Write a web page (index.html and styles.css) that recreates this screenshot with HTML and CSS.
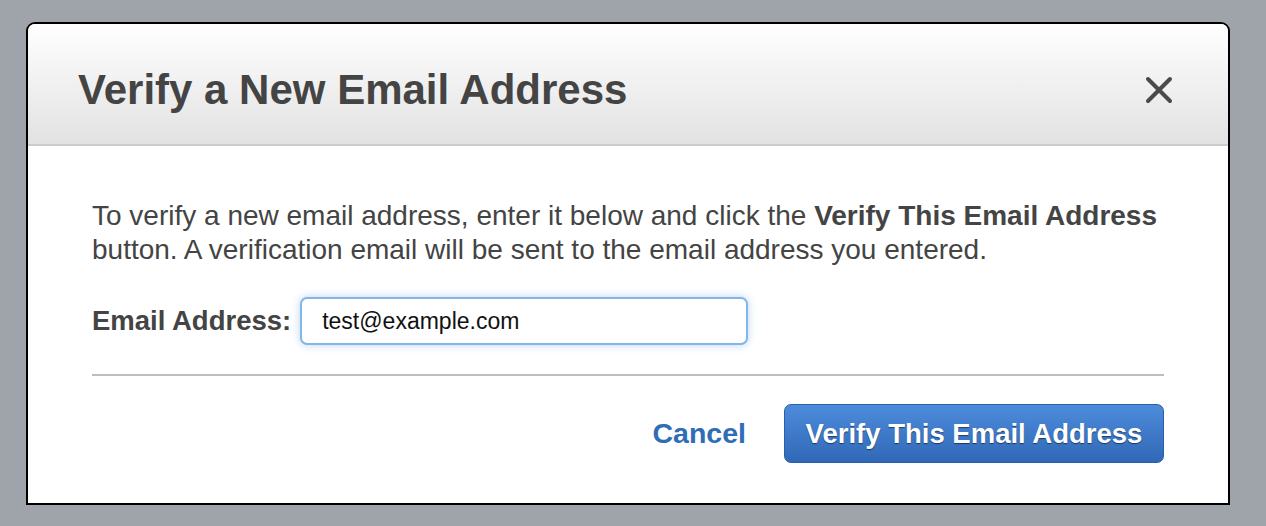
FILE: index.html
```html
<!DOCTYPE html>
<html lang="en">
<head>
    <meta charset="UTF-8">
    <title>Verify a New Email Address</title>
    <link rel="stylesheet" href="styles.css">
</head>
<body>
    <div class="dialog">
        <div class="dialog-header">
            <h2>Verify a New Email Address</h2>
            <svg class="close" width="28" height="28" viewBox="0 0 28 28">
                <path d="M3 3 L25 25 M25 3 L3 25" stroke="#4a4a4a" stroke-width="4" stroke-linecap="round"/>
            </svg>
        </div>
        <div class="dialog-body">
            <p>To verify a new email address, enter it below and click the <strong>Verify This Email Address</strong> button. A verification email will be sent to the email address you entered.</p>
            <div class="field">
                <label for="email">Email Address:</label>
                <input type="text" id="email" value="test@example.com">
            </div>
            <div class="actions">
                <a class="cancel" href="#">Cancel</a>
                <button class="primary">Verify This Email Address</button>
            </div>
        </div>
    </div>
</body>
</html>
```
FILE: styles.css
```css
html, body {
    margin: 0;
    height: 100%;
}
body {
    background-color: #9fa3aa;
    font-family: "Liberation Sans", Arial, sans-serif;
    color: #444;
    padding: 22px 0 0 26px;
    box-sizing: border-box;
    overflow: hidden;
}
.dialog {
    width: 1204px;
    height: 483px;
    box-sizing: border-box;
    background-color: white;
    border: 2px solid #000;
    border-radius: 9px 9px 0 0;
    overflow: hidden;
}
.dialog-header {
    height: 122px;
    box-sizing: border-box;
    background: linear-gradient(#ffffff, #e2e2e2);
    border-bottom: 2px solid #cccccc;
    display: flex;
    align-items: center;
    justify-content: space-between;
    padding: 12px 55px 0 50px;
}
h2 {
    margin: 0;
    font-size: 42px;
    font-weight: bold;
    color: #444;
}
.close {
    display: block;
}
.dialog-body {
    padding: 0 64px;
}
p {
    margin: 53px 0 30px;
    font-size: 28px;
    line-height: 34px;
    color: #444;
}
.field {
    display: flex;
    align-items: center;
    gap: 9px;
    padding-bottom: 29px;
    border-bottom: 2px solid #bdbdbd;
}
label {
    font-size: 27.5px;
    font-weight: bold;
}
input {
    width: 448px;
    height: 48px;
    box-sizing: border-box;
    border: 2px solid #84b5ea;
    border-radius: 7px;
    box-shadow: 0 0 8px rgba(100, 160, 230, 0.45);
    padding: 0 20px;
    font-family: "Liberation Sans", Arial, sans-serif;
    font-size: 23px;
    color: #111;
    outline: none;
}
.actions {
    display: flex;
    justify-content: flex-end;
    align-items: center;
    gap: 38px;
    margin-top: 28px;
}
.cancel {
    color: #2f6db6;
    font-weight: bold;
    font-size: 28.5px;
    text-decoration: none;
}
.primary {
    width: 380px;
    height: 59px;
    background: linear-gradient(#4d8cdb, #3068b7);
    border: 1px solid #2b5fa6;
    border-radius: 7px;
    color: white;
    font-family: "Liberation Sans", Arial, sans-serif;
    font-weight: bold;
    font-size: 27.5px;
    text-shadow: 0 1px 1px rgba(0, 0, 0, 0.5);
    cursor: pointer;
}
```
